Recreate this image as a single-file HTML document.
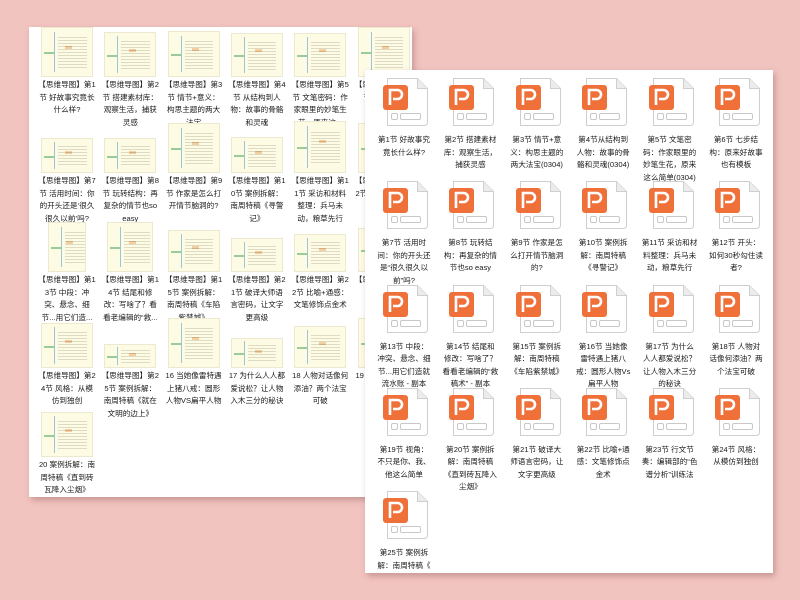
<!DOCTYPE html>
<html><head><meta charset="utf-8"><style>
*{margin:0;padding:0;box-sizing:border-box}
body{width:800px;height:600px;background:#f2c4c0;position:relative;overflow:hidden;font-family:"Liberation Sans","Noto Sans CJK SC",sans-serif;font-size:7.6px;color:#1a1a1a}
.panel{position:absolute;background:#fff;box-shadow:2px 3px 6px rgba(120,60,60,.35);overflow:hidden}
.c{position:absolute;text-align:center;line-height:12.5px;word-break:break-all}
.t{position:absolute;background:#fdfbe4;border:1px solid #ece9cf;overflow:hidden}
.t i{position:absolute;display:block}
.ic{position:absolute;width:50px;height:48px}
</style></head><body>
<div class="panel" style="left:29px;top:27px;width:383px;height:470px" id="L"></div>
<div class="panel" style="left:365px;top:70px;width:408px;height:503px" id="R"></div>
<script>
var L=document.getElementById('L'),R=document.getElementById('R');
var lt=[
[["【思维导图】第1节 好故事究竟长什么样?",52,50],["【思维导图】第2节 搭建素材库：观察生活，捕获灵感",52,45],["【思维导图】第3节 情节+意义：构思主题的两大法宝",52,46],["【思维导图】第4节 从结构到人物：故事的骨骼和灵魂",52,44],["【思维导图】第5节 文笔密码：作家眼里的妙笔生花，原来这...",52,44],["【思维导图】第6节 七步结构",52,50]],
[["【思维导图】第7节 活用时间：你的开头还是‘很久很久以前’吗?",52,35],["【思维导图】第8节 玩转结构：再复杂的情节也so easy",52,35],["【思维导图】第9节 作家是怎么打开情节脑洞的?",52,50],["【思维导图】第10节 案例拆解：南周特稿《寻警记》",52,36],["【思维导图】第11节 采访和材料整理：兵马未动，粮草先行",52,52],["【思维导图】第12节 开头：如何30秒",52,50]],
[["【思维导图】第13节 中段：冲突、悬念、细节...用它们造...",38,50],["【思维导图】第14节 结尾和修改：写啥了？看看老编辑的“救...",46,50],["【思维导图】第15节 案例拆解：南周特稿《车陷紫禁城》",52,42],["【思维导图】第21节 破译大师语言密码，让文字更高级",52,34],["【思维导图】第22节 比喻+通感：文笔修饰点金术",52,38],["【思维导图】第23节 编辑",52,44]],
[["【思维导图】第24节 风格：从模仿到独创",52,45],["【思维导图】第25节 案例拆解：南周特稿《就在文明的边上》",52,24],["16 当她像雷特遇上猪八戒：圆形人物VS扁平人物",52,50],["17 为什么人人都爱说松？让人物入木三分的秘诀",52,30],["18 人物对话像何添油？两个法宝可破",52,42],["19 视角：不只是你",52,50]],
[["20 案例拆解：南周特稿《直到砖瓦降入尘烟》",52,45]]];
var lb=[77,173,272,368,457];
var h='';
lt.forEach(function(row,r){row.forEach(function(it,c){
 var cx=38+c*63.3, b=lb[r]-27, w=it[1], ht=it[2];
 h+='<div class="t" style="left:'+(cx-w/2)+'px;top:'+(b-ht)+'px;width:'+w+'px;height:'+ht+'px">'+
 '<i style="left:2px;top:'+(ht/2-1)+'px;width:10px;height:2px;background:#9c9"></i>'+
 '<i style="left:12px;top:8%;width:1px;height:84%;background:#9cc6d8"></i>'+
 '<i style="left:'+(w*0.45)+'px;top:'+(ht*0.35)+'px;width:7px;height:3px;background:#e58a3c"></i>'+
 '<i style="left:16px;top:15%;width:'+(w*0.55)+'px;height:70%;background:repeating-linear-gradient(#fdfbe4 0 2px,#c9c6b0 2px 3px);opacity:.6"></i></div>';
 h+='<div class="c" style="left:'+(cx-29)+'px;top:'+(b+2)+'px;width:58px">'+it[0]+'</div>';
});});
L.innerHTML=h;
var rt=["第1节 好故事究竟长什么样?","第2节 搭建素材库：观察生活，捕获灵感","第3节 情节+意义：构思主题的两大法宝(0304)","第4节从结构到人物：故事的骨骼和灵魂(0304)","第5节 文笔密码：作家眼里的妙笔生花，原来这么简单(0304)","第6节 七步结构：原来好故事也有模板",
"第7节 活用时间：你的开头还是“很久很久以前”吗?","第8节 玩转结构：再复杂的情节也so easy","第9节 作家是怎么打开情节脑洞的?","第10节 案例拆解：南周特稿《寻警记》","第11节 采访和材料整理：兵马未动，粮草先行","第12节 开头：如何30秒勾住读者?",
"第13节 中段：冲突、悬念、细节...用它们造就流水账 - 副本","第14节 结尾和修改：写啥了？看看老编辑的“救稿术” - 副本","第15节 案例拆解：南周特稿《车陷紫禁城》","第16节 当她像雷特遇上猪八戒：圆形人物Vs扁平人物","第17节 为什么人人都爱说松？让人物入木三分的秘诀","第18节 人物对话像何添油？两个法宝可破",
"第19节 视角：不只是你、我、他这么简单","第20节 案例拆解：南周特稿《直到砖瓦降入尘烟》","第21节 破译大师语言密码，让文字更高级","第22节 比喻+通感：文笔修饰点金术","第23节 行文节奏：编辑部的“色谱分析”训练法","第24节 风格：从模仿到独创","第25节 案例拆解：南周特稿《"];
var icon='<svg width="50" height="48" viewBox="0 0 50 48"><path d="M6.5 .5h30l10 10v34a3 3 0 0 1-3 3h-37z" fill="#fff" stroke="#cfcfcf"/><path d="M36.5 .5v10h10" fill="#ececec" stroke="#cfcfcf"/><rect x="10.5" y="35.5" width="6" height="6" rx="1.5" fill="none" stroke="#c8c8c8"/><rect x="19.5" y="35.5" width="20" height="6" rx="1.5" fill="none" stroke="#c8c8c8"/><rect x="2" y="7" width="25" height="25" rx="3" fill="#f0703a"/><path d="M9 27V12h7.5a4.5 4.5 0 0 1 0 9H12" fill="none" stroke="#fff" stroke-width="2.6"/></svg>';
h='';
rt.forEach(function(s,i){var r=Math.floor(i/6),c=i%6;var x=12+c*66.4,y=8+r*103.3;
h+='<div class="ic" style="left:'+(x+4)+'px;top:'+y+'px">'+icon+'</div><div class="c" style="left:'+(x-1)+'px;top:'+(y+56)+'px;width:56px">'+s+'</div>';});
R.innerHTML=h;
</script>
</body></html>
